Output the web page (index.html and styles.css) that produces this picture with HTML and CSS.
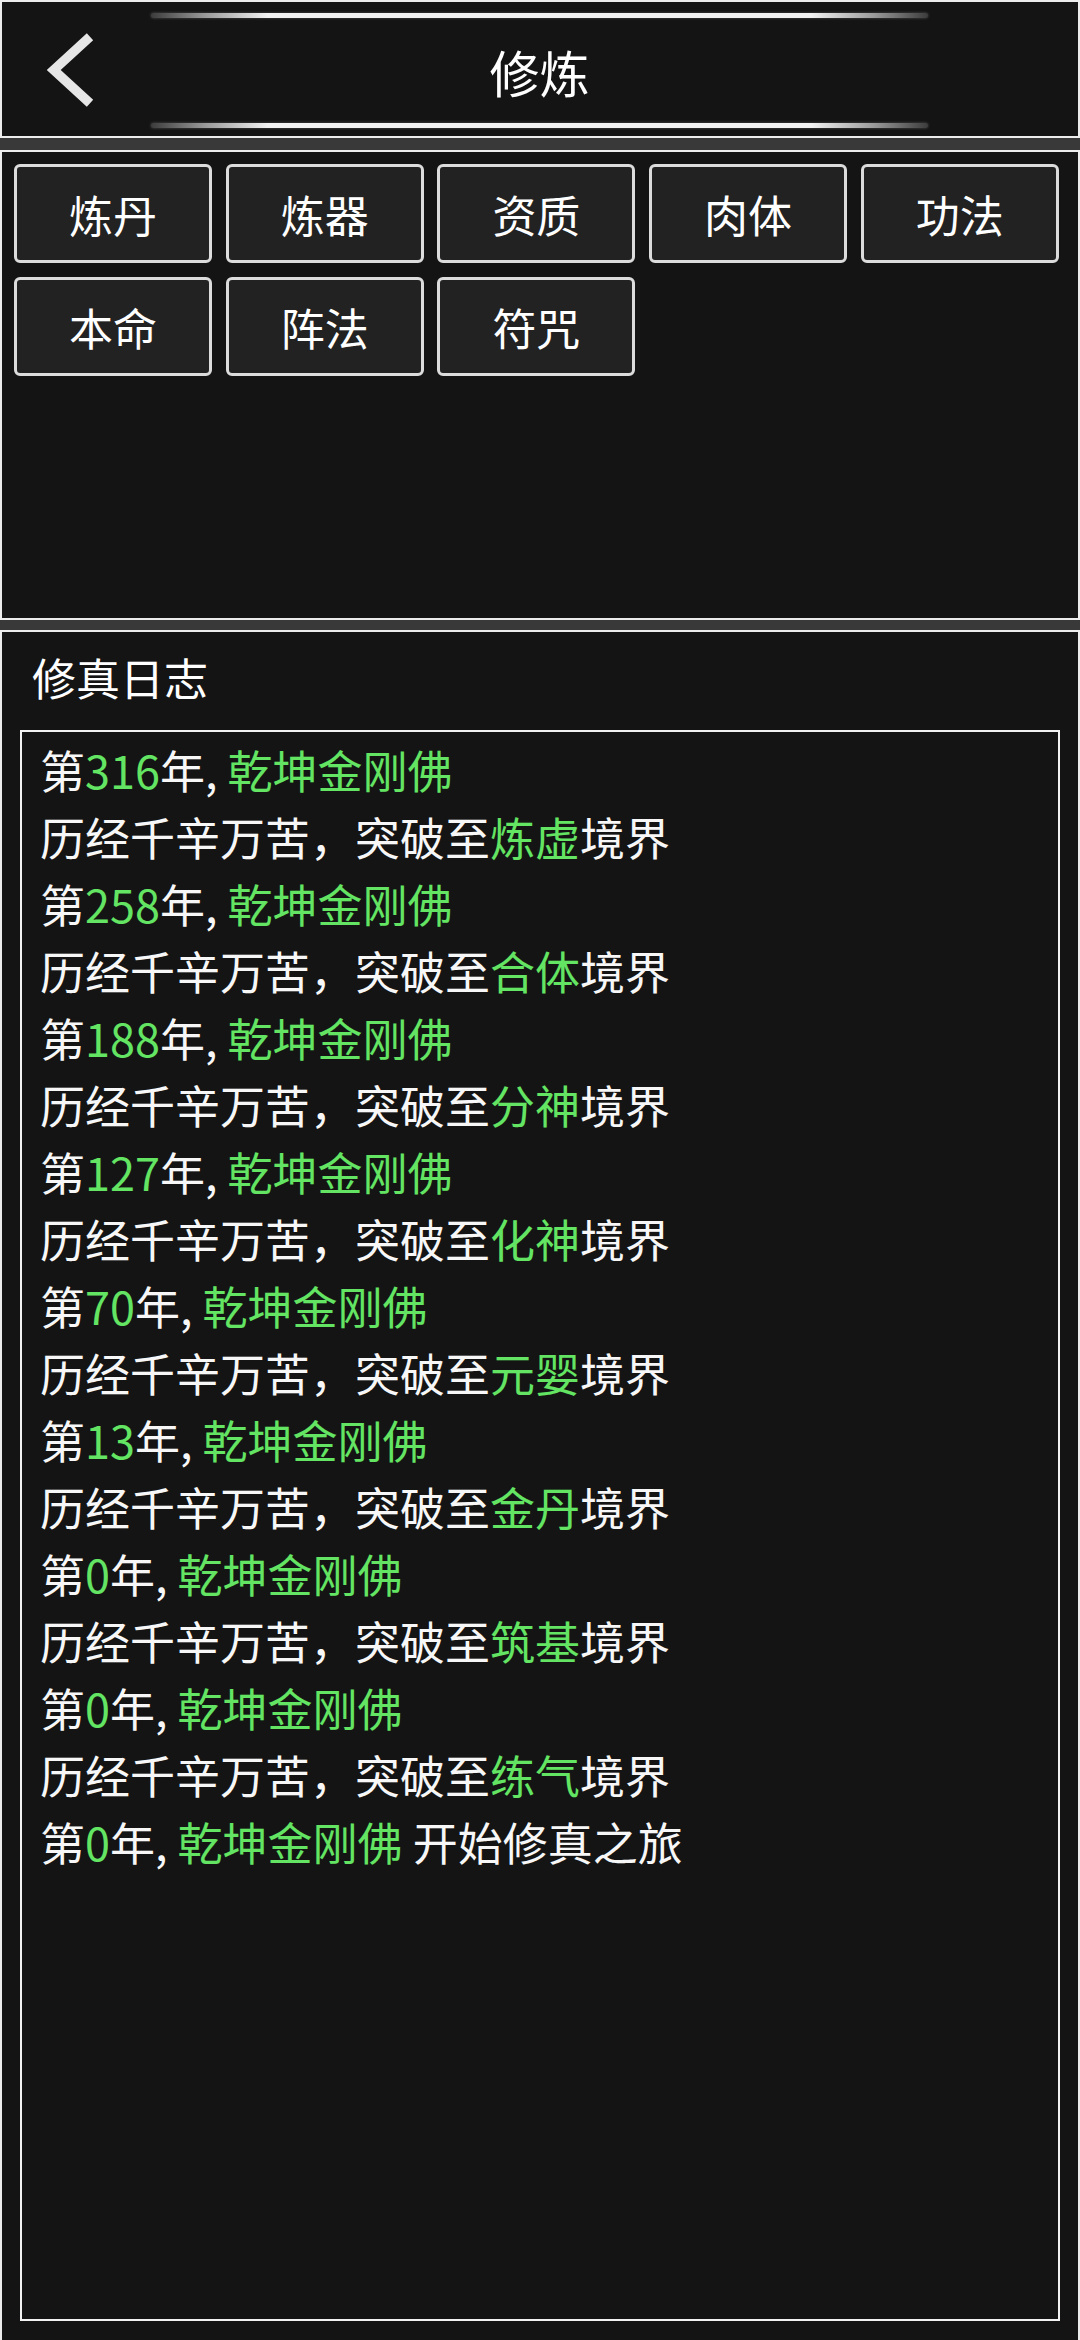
FILE: index.html
```html
<!DOCTYPE html>
<html lang="zh-CN">
<head>
    <meta charset="UTF-8">
    <meta name="viewport" content="width=device-width, initial-scale=1.0">
    <title>修炼</title>
    <link rel="stylesheet" href="styles.css">
</head>
<body>
    <div class="screen">
        <header class="topbar">
            <a class="back" href="#" aria-label="返回">
                <svg width="70" height="90" viewBox="30 24 70 90">
                    <polyline points="90,36.7 53.7,70 90,103.3" fill="none" stroke="#e6e6e6" stroke-width="9.4" stroke-linejoin="miter"/>
                </svg>
            </a>
            <div class="title-wrap">
                <div class="glow-line"></div>
                <h1>修炼</h1>
                <div class="glow-line"></div>
            </div>
        </header>

        <section class="panel tabs">
            <button class="tab">炼丹</button>
            <button class="tab">炼器</button>
            <button class="tab">资质</button>
            <button class="tab">肉体</button>
            <button class="tab">功法</button>
            <button class="tab">本命</button>
            <button class="tab">阵法</button>
            <button class="tab">符咒</button>
        </section>

        <section class="panel journal">
            <h2>修真日志</h2>
            <div class="log">
                <div>第<span class="hl">316</span>年, <span class="hl">乾坤金刚佛</span></div>
                <div>历经千辛万苦，突破至<span class="hl">炼虚</span>境界</div>
                <div>第<span class="hl">258</span>年, <span class="hl">乾坤金刚佛</span></div>
                <div>历经千辛万苦，突破至<span class="hl">合体</span>境界</div>
                <div>第<span class="hl">188</span>年, <span class="hl">乾坤金刚佛</span></div>
                <div>历经千辛万苦，突破至<span class="hl">分神</span>境界</div>
                <div>第<span class="hl">127</span>年, <span class="hl">乾坤金刚佛</span></div>
                <div>历经千辛万苦，突破至<span class="hl">化神</span>境界</div>
                <div>第<span class="hl">70</span>年, <span class="hl">乾坤金刚佛</span></div>
                <div>历经千辛万苦，突破至<span class="hl">元婴</span>境界</div>
                <div>第<span class="hl">13</span>年, <span class="hl">乾坤金刚佛</span></div>
                <div>历经千辛万苦，突破至<span class="hl">金丹</span>境界</div>
                <div>第<span class="hl">0</span>年, <span class="hl">乾坤金刚佛</span></div>
                <div>历经千辛万苦，突破至<span class="hl">筑基</span>境界</div>
                <div>第<span class="hl">0</span>年, <span class="hl">乾坤金刚佛</span></div>
                <div>历经千辛万苦，突破至<span class="hl">练气</span>境界</div>
                <div>第<span class="hl">0</span>年, <span class="hl">乾坤金刚佛</span> 开始修真之旅</div>
            </div>
        </section>
    </div>
</body>
</html>
```

FILE: styles.css
```css
/* General */
body {
    margin: 0;
    padding: 0;
    background-color: #393939;
    color: #f7f7f7;
    font-family: "Noto Sans CJK SC", "Noto Sans", sans-serif;
}

.screen {
    height: 2340px;
    display: flex;
    flex-direction: column;
    overflow: hidden;
}

/* Barra superior */
.topbar {
    height: 138px;
    box-sizing: border-box;
    border: 2px solid #ececec;
    background-color: #141414;
    display: grid;
    grid-template-columns: 149px 777px 1fr;
    margin-bottom: 12px;
}

.back {
    display: flex;
    align-items: center;
    justify-content: flex-start;
    padding-left: 28px;
}

.back svg {
    display: block;
}

.title-wrap {
    display: flex;
    flex-direction: column;
    padding-top: 11px;
}

.glow-line {
    height: 5px;
    border-radius: 2px;
    background: linear-gradient(90deg, #3c3c3c 0%, #9a9a9a 7%, #f2f2f2 15%, #f2f2f2 85%, #9a9a9a 93%, #3c3c3c 100%);
    box-shadow: 0 0 3px rgba(255, 255, 255, 0.25);
}

h1 {
    margin: 0;
    height: 105px;
    display: flex;
    align-items: center;
    justify-content: center;
    font-size: 50px;
    font-weight: 400;
    color: #ffffff;
}

/* Paneles */
.panel {
    box-sizing: border-box;
    border: 2px solid #ececec;
    background-color: #141414;
}

.tabs {
    height: 470px;
    margin-bottom: 10px;
    padding: 12px 0 0 12px;
    display: grid;
    grid-template-columns: repeat(5, 198px);
    grid-auto-rows: 99px;
    column-gap: 13.7px;
    row-gap: 14px;
    align-content: start;
}

.tab {
    box-sizing: border-box;
    border: 3px solid #dcdcdc;
    border-radius: 6px;
    background-color: #222222;
    color: #ffffff;
    font-family: inherit;
    font-size: 44px;
    padding: 0;
    cursor: pointer;
}

/* Diario */
.journal {
    flex: 1;
    display: flex;
    flex-direction: column;
    padding: 23px 18px 19px;
    border-bottom: none;
}

.journal h2 {
    margin: 0 0 31px 12px;
    font-size: 44px;
    line-height: 44px;
    font-weight: 400;
    color: #ffffff;
}

.log {
    flex: 1;
    border: 2px solid #f2f2f2;
    padding: 4px 18px 1px;
    font-size: 45px;
    line-height: 67px;
    color: #f7f7f7;
}

.hl {
    color: #63e463;
}
```
